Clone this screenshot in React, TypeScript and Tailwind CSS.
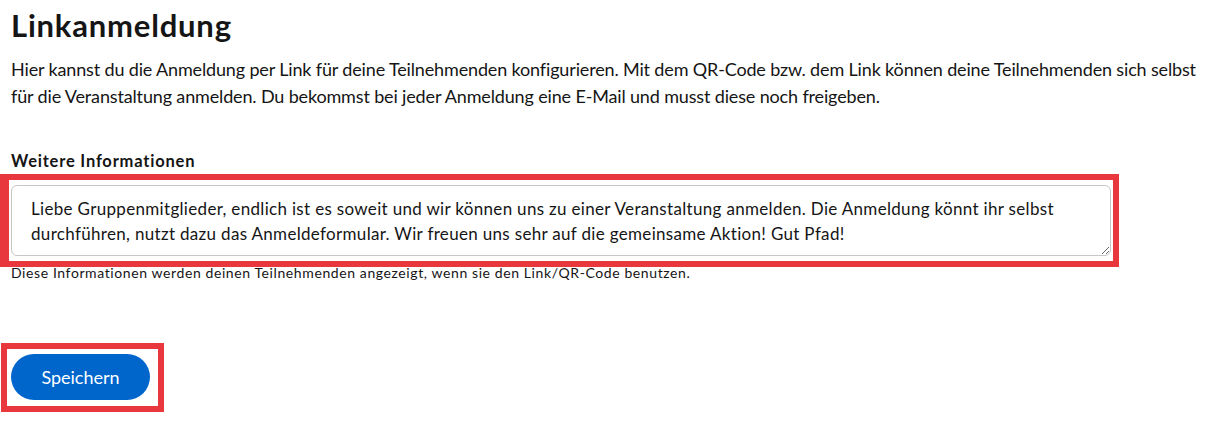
export default function App() {
    const note =
        "Liebe Gruppenmitglieder, endlich ist es soweit und wir können uns zu einer Veranstaltung anmelden. Die Anmeldung könnt ihr selbst durchführen, nutzt dazu das Anmeldeformular. Wir freuen uns sehr auf die gemeinsame Aktion! Gut Pfad!"

    return (
        <div className="min-h-screen bg-white pl-[11px] pr-[6px] pt-[7px] text-[#151515] font-['Lato','Liberation_Sans',sans-serif]">
            {/* Title */}
            <h1 className="text-[31px] leading-[36px] font-bold tracking-[0.8px]">Linkanmeldung</h1>
            <p className="mt-[13px] text-[18px] leading-[27px] tracking-[-0.15px]">
                Hier kannst du die Anmeldung per Link für deine Teilnehmenden konfigurieren. Mit dem QR-Code bzw. dem Link können deine Teilnehmenden sich selbst für die Veranstaltung anmelden. Du bekommst bei jeder Anmeldung eine E-Mail und musst diese noch freigeben.
            </p>

            {/* Form field */}
            <div className="mt-[39px]">
                <label className="block text-[16.5px] leading-[24px] font-bold tracking-[0.8px]">Weitere Informationen</label>
                <div className="relative mt-[12px] w-[1100px]">
                    <textarea
                        defaultValue={note}
                        className="block h-[71px] w-full resize-y rounded-[6px] border border-[#c7c7c7] bg-white pl-[19px] pr-[10px] pt-[10px] text-[17px] leading-[25px] tracking-[0.32px] outline-none"
                    />
                    <div className="pointer-events-none absolute -left-[11px] -top-[11px] -right-[8px] -bottom-[11px] border-[6px] border-l-[9px] border-[#e8383d]" />
                </div>
                <p className="mt-[7px] text-[14px] leading-[20px] tracking-[0.6px]">
                    Diese Informationen werden deinen Teilnehmenden angezeigt, wenn sie den Link/QR-Code benutzen.
                </p>
            </div>

            {/* Actions */}
            <div className="relative mt-[71px] w-fit">
                <button className="h-[46px] w-[139px] rounded-full bg-[#0066cc] text-[18px] text-white">
                    Speichern
                </button>
                <div className="pointer-events-none absolute -left-[10px] -top-[11px] -right-[14px] -bottom-[12px] border-[6px] border-[#e8383d]" />
            </div>
        </div>
    )
}
